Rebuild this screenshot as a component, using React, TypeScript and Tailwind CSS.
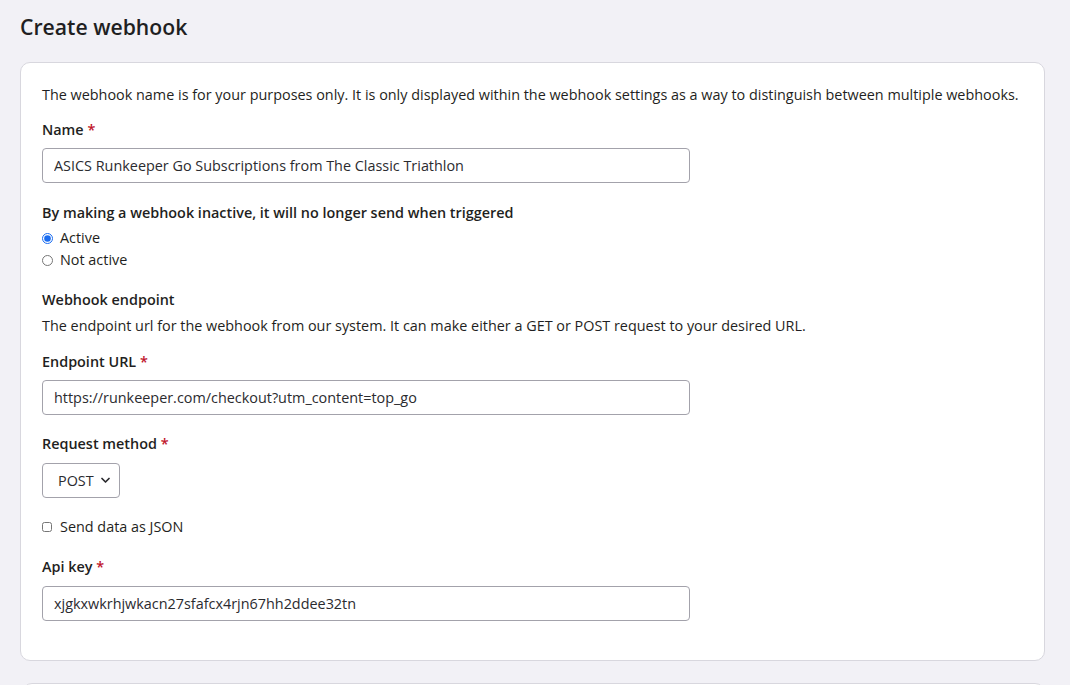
import { useState } from 'react';

const font = { fontFamily: '"Open Sans", "Noto Sans", sans-serif' };

function Label({ text, required, className = '' }: { text: string; required?: boolean; className?: string }) {
  return (
    <div className={`text-[14.4px] leading-[20px] font-semibold text-[#1f1f22] ${className}`}>
      {text}
      {required && <span className="text-[#c0142b]"> *</span>}
    </div>
  );
}

function TextInput({ value, className = '' }: { value: string; className?: string }) {
  return (
    <input
      type="text"
      defaultValue={value}
      className={`block w-[648px] h-[35px] px-[11px] text-[14.4px] text-[#2b2b2f] bg-white border border-[#a3a2ab] rounded-[4px] outline-none ${className}`}
      style={font}
    />
  );
}

export default function App() {
  const [active, setActive] = useState(true);
  const [json, setJson] = useState(false);

  return (
    <div className="h-[685px] bg-[#f2f1f6] pl-[20px] pr-[25px] pt-[12px] overflow-hidden" style={font}>
      <h1 className="text-[21.2px] leading-[30px] font-semibold text-[#1f1f22]">Create webhook</h1>

      <div className="mt-[20px] bg-white border border-[#d8d7de] rounded-[10px] pl-[21px] pr-[21px] pt-[22px] pb-[39px]">
        <p className="text-[14.4px] leading-[20px] text-[#1f1f22]">
          The webhook name is for your purposes only. It is only displayed within the webhook settings as a way to distinguish between multiple webhooks.
        </p>

        <Label text="Name" required className="mt-[15px]" />
        <TextInput value="ASICS Runkeeper Go Subscriptions from The Classic Triathlon" className="mt-[8px]" />

        <Label text="By making a webhook inactive, it will no longer send when triggered" className="mt-[20px]" />
        <div className="mt-[4px] flex flex-col">
          <label className="flex items-center gap-[7px] h-[22px] text-[14.4px] text-[#1f1f22]">
            <input
              type="radio"
              name="active"
              checked={active}
              onChange={() => setActive(true)}
              className="w-[11px] h-[11px] m-0 accent-[#1a6cf0]"
            />
            Active
          </label>
          <label className="flex items-center gap-[7px] h-[22px] text-[14.4px] text-[#1f1f22]">
            <input
              type="radio"
              name="active"
              checked={!active}
              onChange={() => setActive(false)}
              className="w-[11px] h-[11px] m-0 accent-[#1a6cf0]"
            />
            Not active
          </label>
        </div>

        <Label text="Webhook endpoint" className="mt-[19px]" />
        <p className="mt-[6px] text-[14.4px] leading-[20px] text-[#1f1f22]">
          The endpoint url for the webhook from our system. It can make either a GET or POST request to your desired URL.
        </p>

        <Label text="Endpoint URL" required className="mt-[16px]" />
        <TextInput value="https://runkeeper.com/checkout?utm_content=top_go" className="mt-[8px]" />

        <Label text="Request method" required className="mt-[19px]" />
        <div className="relative mt-[9px] w-[78px]">
          <select
            defaultValue="POST"
            className="appearance-none block w-[78px] h-[35px] pl-[15px] text-[14.4px] text-[#2b2b2f] bg-white border border-[#a3a2ab] rounded-[4px] outline-none"
            style={font}
          >
            <option>GET</option>
            <option>POST</option>
          </select>
          <svg
            className="absolute right-[10px] top-[14px] pointer-events-none"
            width="9"
            height="7"
            viewBox="0 0 9 7"
            fill="none"
          >
            <path d="M1 1.5 L4.5 5 L8 1.5" stroke="#2b2b2f" strokeWidth="1.7" strokeLinecap="round" strokeLinejoin="round" />
          </svg>
        </div>

        <label className="mt-[19px] flex items-center gap-[8px] h-[20px] text-[14.4px] text-[#1f1f22]">
          <input
            type="checkbox"
            checked={json}
            onChange={() => setJson(!json)}
            className="w-[10px] h-[10px] m-0"
          />
          Send data as JSON
        </label>

        <Label text="Api key" required className="mt-[20px]" />
        <TextInput value="xjgkxwkrhjwkacn27sfafcx4rjn67hh2ddee32tn" className="mt-[9px]" />
      </div>

      <div className="mt-[22px] ml-[2px] h-[40px] bg-white border border-[#d8d7de] rounded-[10px]" />
    </div>
  );
}
